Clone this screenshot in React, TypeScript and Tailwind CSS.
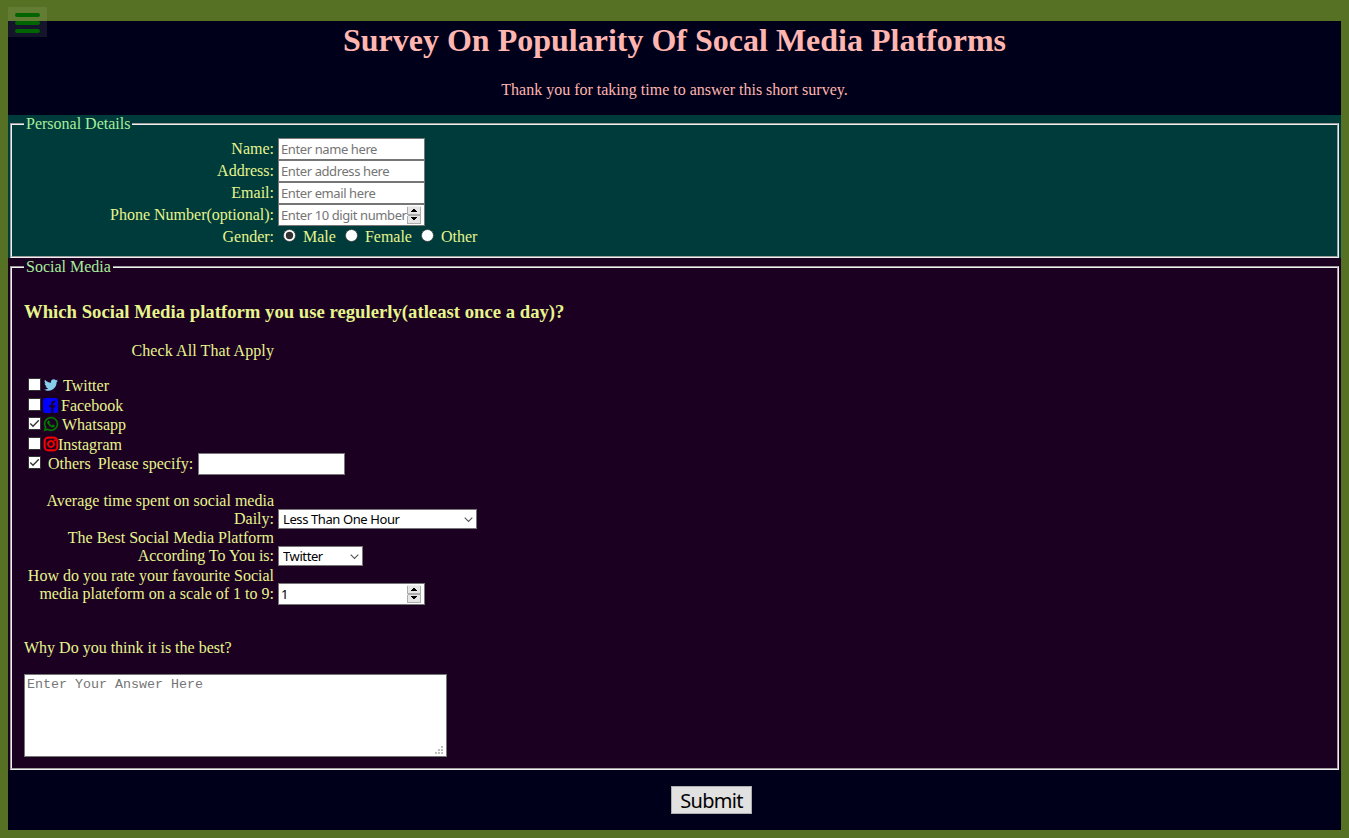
import React from "react";
import { FaTwitter, FaWhatsapp, FaInstagram } from "react-icons/fa";

const control =
  "appearance-none rounded-none border border-[#767676] bg-white font-['Noto_Sans',sans-serif] text-[13px] tracking-[-0.4px] text-black outline-none placeholder:text-[#757575] placeholder:opacity-100";

function Spinner() {
  return (
    <svg width="14" height="18" viewBox="0 0 14 18" className="absolute right-[4px] top-[2px]" shapeRendering="crispEdges">
      <rect width="14" height="18" fill="#f0f0f0" />
      <path d="M0.5 0.5V8.5H13.5V0.5M0.5 9.5V17.5H13.5V9.5H0.5" fill="#e6e6e6" stroke="#adadad" />
      <path d="M4 6H10V5H9V4H8V3H6V4H5V5H4ZM4 11H10V12H9V13H8V14H6V13H5V12H4Z" fill="#000" />
    </svg>
  );
}

function Field({ label, placeholder, value, number }: { label: string; placeholder?: string; value?: string; number?: boolean }) {
  return (
    <div className="flex h-[22px] items-center gap-1">
      <label className="w-[250px] text-right">{label}</label>
      <div className="relative h-[22px]">
        <input className={`${control} block h-[22px] w-[147px] px-[2px]`} placeholder={placeholder} defaultValue={value} />
        {number && <Spinner />}
      </div>
    </div>
  );
}

function Radio({ checked, label, className }: { checked?: boolean; label: string; className: string }) {
  return (
    <label className={`flex items-center ${className}`}>
      <svg width="13" height="13" viewBox="0 0 13 13" className="mb-[3px] mr-[7px]">
        <circle cx="6.5" cy="6.5" r="6" fill="#fff" stroke="#333" strokeWidth="0.7" />
        {checked && <circle cx="6.5" cy="6.5" r="3.7" fill="#333" />}
      </svg>
      {label}
    </label>
  );
}

function Check({ checked }: { checked?: boolean }) {
  return (
    <svg width="13" height="13" viewBox="0 0 13 13" className="ml-1 mt-px shrink-0">
      <rect x="0.5" y="0.5" width="12" height="12" fill="#fff" stroke="#333" />
      {checked && <path d="M2.3 6.5L5 9.3L10.8 3.2" fill="none" stroke="#333" strokeWidth="1.3" />}
    </svg>
  );
}

function FacebookIcon() {
  return (
    <svg width="15" height="15" viewBox="0 0 15 15" className="ml-[2px] mr-[3px] mt-px shrink-0">
      <rect width="15" height="15" rx="2.8" fill="#0000ff" />
      <path d="M8.2 15V9.4H6.3V7.3H8.2V5.6C8.2 3.8 9.3 2.8 10.9 2.8H12.4V4.6H11.4C10.5 4.6 10.2 5.1 10.2 5.8V7.3H12.3L12 9.4H10.2V15Z" fill="#1c0022" />
    </svg>
  );
}

function Select({ value, className }: { value: string; className: string }) {
  return (
    <div className="relative -mb-px">
      <select className={`${control} block h-5 pl-[4px] leading-[18px] ${className}`}>
        <option>{value}</option>
      </select>
      <svg width="9" height="6" viewBox="0 0 9 6" className="absolute right-[4px] top-[8px]">
        <path d="M0.7 0.7L4.5 4.5L8.3 0.7" fill="none" stroke="#555" strokeWidth="1.1" />
      </svg>
    </div>
  );
}

const fieldset = "mx-[2px] border-2 border-[#f0f0f0] px-3 [border-style:groove]";

export default function App() {
  return (
    <div className="relative h-[838px] w-full overflow-hidden bg-[#567123] px-2 pt-[21px] font-['Liberation_Serif',serif] text-[16px] leading-[18px] text-[#e6f58c]">
      <form className="h-[809px] bg-[#00001a]">
        <header className="h-[94px] text-center text-[#ffb6b0]">
          <h1 className="pt-px text-[32px] font-bold leading-[37px]">Survey On Popularity Of Socal Media Platforms</h1>
          <p className="mt-[22px]">Thank you for taking time to answer this short survey.</p>
        </header>

        <section className="h-[143px] bg-[#003b3b]">
          <fieldset className={`${fieldset} h-[143px] pt-[5px]`}>
            <legend className="px-[2px] text-[#a5ee9b]">Personal Details</legend>
            <Field label="Name:" placeholder="Enter name here" />
            <Field label="Address:" placeholder="Enter address here" />
            <Field label="Email:" placeholder="Enter email here" />
            <Field label="Phone Number(optional):" placeholder="Enter 10 digit number" number />
            <div className="flex h-[22px] items-center">
              <span className="w-[250px] text-right">Gender:</span>
              <Radio checked label="Male" className="ml-[9px]" />
              <Radio label="Female" className="ml-[9px]" />
              <Radio label="Other" className="ml-[9px]" />
            </div>
          </fieldset>
        </section>

        <section className="h-[512px] bg-[#1c0022]">
          <fieldset className={`${fieldset} h-[512px]`}>
            <legend className="px-[2px] text-[#a5ee9b]">Social Media</legend>
            <h3 className="mt-[25px] text-[18.72px] font-bold leading-[21px]">Which Social Media platform you use regulerly(atleast once a day)?</h3>
            <p className="mt-5 w-[250px] text-right tracking-[0.1px]">Check All That Apply</p>

            <div className="mt-[17px]">
              <div className="flex h-5 items-start">
                <Check />
                <FaTwitter size={14} color="#87ceeb" className="ml-[3px] mr-[5px] mt-px" />
                Twitter
              </div>
              <div className="flex h-[19px] items-start">
                <Check />
                <FacebookIcon />
                Facebook
              </div>
              <div className="flex h-5 items-start">
                <Check checked />
                <FaWhatsapp size={16} color="#008000" strokeWidth={14} className="ml-[2px] mr-[3px]" />
                Whatsapp
              </div>
              <div className="flex h-[19px] items-start">
                <Check />
                <FaInstagram size={16} color="#ff0000" strokeWidth={22} className="-mr-px ml-[2px]" />
                Instagram
              </div>
              <div className="flex h-[19px] items-start">
                <Check checked />
                <span className="ml-[7px]">Others</span>
                <span className="ml-[7px] mr-[5px]">Please specify:</span>
                <input className={`${control} -mt-[2px] h-[22px] w-[147px] px-[2px]`} />
              </div>
            </div>

            <div className="mt-[18px] flex items-end gap-1">
              <label className="w-[250px] text-right">Average time spent on social media Daily:</label>
              <Select value="Less Than One Hour" className="w-[199px]" />
            </div>
            <div className="mt-px flex items-end gap-1">
              <label className="w-[250px] text-right">The Best Social Media Platform According To You is:</label>
              <Select value="Twitter" className="w-[85px]" />
            </div>
            <div className="mt-[2px] flex items-end gap-1">
              <label className="w-[250px] text-right">How do you rate your favourite Social media plateform on a scale of 1 to 9:</label>
              <div className="relative -mb-[2px]">
                <input className={`${control} block h-[22px] w-[147px] px-[2px]`} defaultValue="1" />
                <Spinner />
              </div>
            </div>

            <p className="mt-[36px]">Why Do you think it is the best?</p>
            <div className="relative mt-[17px] h-[83px] w-[423px]">
              <textarea
                placeholder="Enter Your Answer Here"
                className="block h-full w-full resize-none rounded-none border border-[#767676] bg-white px-[2px] py-[2px] font-['Liberation_Mono',monospace] text-[13.33px] leading-[15px] text-black outline-none placeholder:text-[#757575] placeholder:opacity-100"
              />
              <svg width="8" height="8" viewBox="0 0 8 8" className="absolute bottom-[3px] right-[4px]" shapeRendering="crispEdges">
                <path d="M6 0h2v2h-2zM3 3h2v2h-2zM6 3h2v2h-2zM0 6h2v2h-2zM3 6h2v2h-2zM6 6h2v2h-2z" fill="#bfbfbf" />
              </svg>
            </div>
          </fieldset>
        </section>

        <button
          type="button"
          className="ml-[663px] mt-[16px] flex h-7 w-[81px] items-center justify-center border border-[#adadad] bg-[#e1e1e1] pt-[2px] font-['Noto_Sans',sans-serif] text-[20px] leading-6 tracking-[-0.7px] text-black"
        >
          Submit
        </button>
      </form>

      <button type="button" aria-label="Menu" className="absolute left-2 top-[7px] flex h-[30px] w-[39px] flex-col items-center gap-1 bg-white/8 pt-[6px]">
        <span className="h-1 w-[25px] rounded-[2px] bg-[#006400]" />
        <span className="h-1 w-[25px] rounded-[2px] bg-[#006400]" />
        <span className="h-1 w-[25px] rounded-[2px] bg-[#006400]" />
      </button>
    </div>
  );
}
